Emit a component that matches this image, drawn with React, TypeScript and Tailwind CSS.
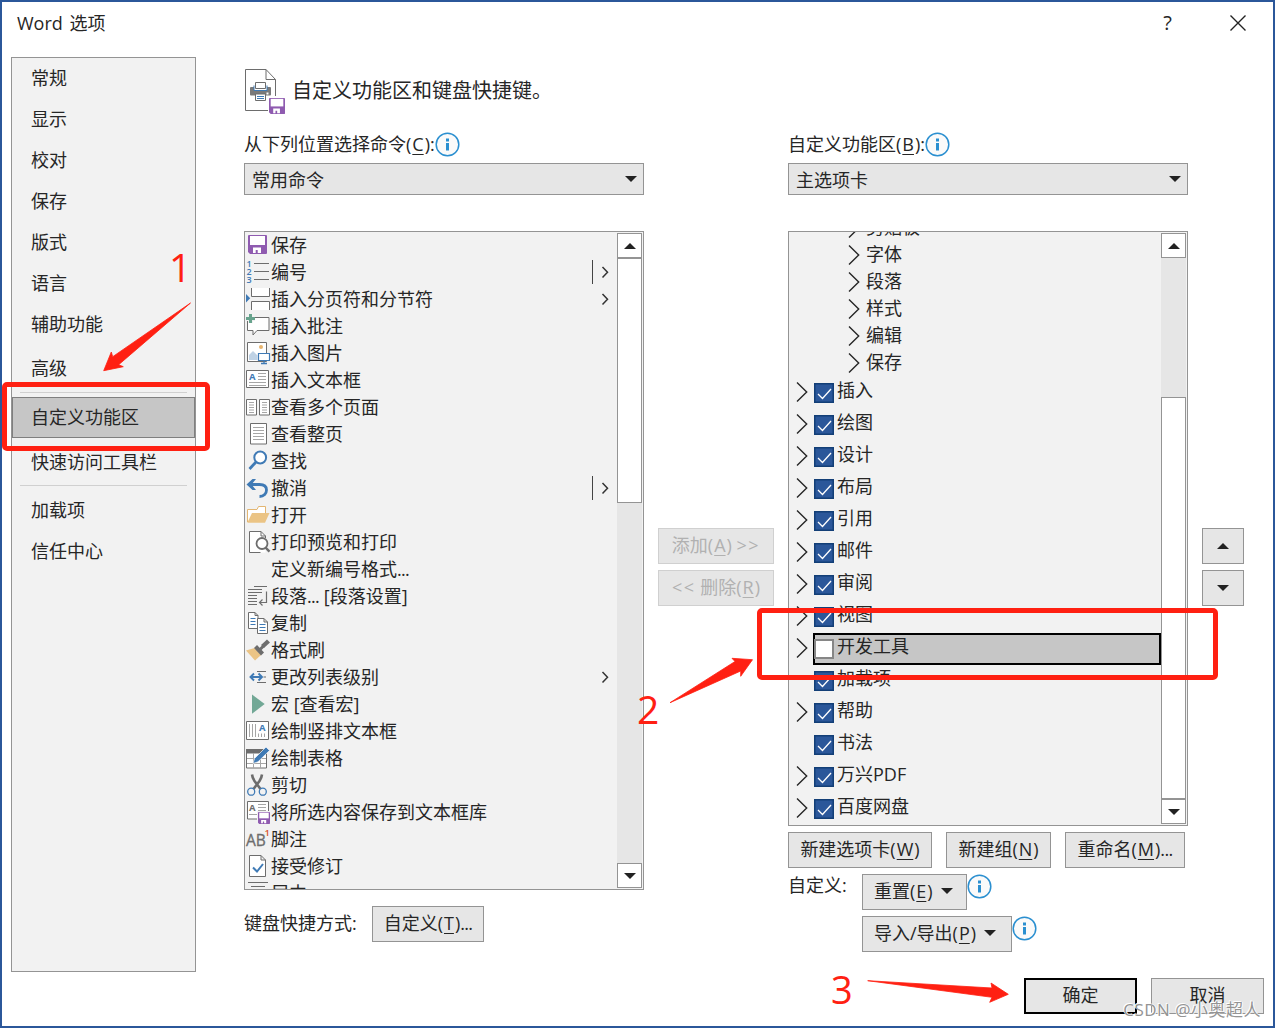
import React from 'react';
import clsx from 'clsx';

const GRAY = '#6d6d6d';
const BLUE = '#3f7ab5';
const PURPLE = '#8f5bb0';
const RED = '#ff2012';

interface Command {
  label: string;
  icon?: React.ReactNode;
  submenu?: 'plain' | 'split';
}

interface Tab {
  label: string;
  expandable?: boolean;
  checked?: boolean;
  selected?: boolean;
}

const Floppy = ({ x, y, size }: { x: number; y: number; size: number }) => (
  <g transform={`translate(${x} ${y}) scale(${size / 19})`}>
    <path d="M1 0h17a1 1 0 0 1 1 1v17a1 1 0 0 1-1 1H2l-2-2V1a1 1 0 0 1 1-1z" fill={PURPLE} />
    <path d="M2 1h15v9H2z" fill="#fff" />
    <path d="M5 12.5h8V18H9.7v-3H7.7v3H5z" fill="#fff" />
  </g>
);

const commands: Command[] = [
  { label: '保存', icon: <Floppy x={3} y={3} size={19} /> },
  {
    label: '编号',
    submenu: 'split',
    icon: (
      <>
        <g fill={BLUE} fontSize="9" fontWeight="600" fontFamily="Open Sans, sans-serif">
          <text x="1.5" y="8">1</text>
          <text x="1.5" y="16">2</text>
          <text x="1.5" y="24">3</text>
        </g>
        <path d="M9 4.5h15M9 12.5h15M9 20.5h15" stroke={GRAY} />
      </>
    ),
  },
  {
    label: '插入分页符和分节符',
    submenu: 'plain',
    icon: (
      <>
        <path d="M6.5 2v8.5h18V2M6.5 24v-8.5h18V24" fill="#fff" stroke={GRAY} />
        <path d="M1 8l4.2 4.2L1 16.4z" fill={BLUE} />
      </>
    ),
  },
  {
    label: '插入批注',
    icon: (
      <>
        <path d="M2.5 4.5h21.5v13H12L8 22v-4.5H2.5z" fill="#fff" stroke={GRAY} />
        <path d="M5.5 1v9M1 5.5h9" stroke="#f2f2f2" strokeWidth="5" />
        <path d="M5.5 1v9M1 5.5h9" stroke="#67a38d" strokeWidth="3" />
      </>
    ),
  },
  {
    label: '插入图片',
    icon: (
      <>
        <path d="M2.5 2.5h19v19h-19z" fill="#fff" stroke={GRAY} />
        <circle cx="16" cy="7" r="2" fill="#e8b56f" />
        <path d="M4 20v-5l4-4 4.5 4.5V20z" fill="#bfd2e5" />
        <path d="M13.5 13.5h11v7h-11z" fill="#fff" stroke={BLUE} strokeWidth="1.2" />
        <path d="M19 21v2.5M16 23.5h6" stroke={BLUE} strokeWidth="1.3" />
      </>
    ),
  },
  {
    label: '插入文本框',
    icon: (
      <>
        <path d="M1.5 3.5h22v17h-22z" fill="#fff" stroke={GRAY} />
        <text x="4" y="13.3" fill={BLUE} fontSize="9.5" fontWeight="700" fontFamily="Open Sans, sans-serif">A</text>
        <path d="M13 6.5h8M13 9.5h8M13 12.5h8M4 15.5h17M4 18.5h17" stroke="#a6a6a6" />
      </>
    ),
  },
  {
    label: '查看多个页面',
    icon: (
      <>
        <path d="M1.5 5.5h10v15.5h-10zM14.5 5.5h10v15.5h-10z" fill="#fff" stroke={GRAY} />
        <path
          d="M4 8.5h5M4 11h5M4 13.5h5M4 16h5M4 18.5h5M17 8.5h5M17 11h5M17 13.5h5M17 16h5M17 18.5h5"
          stroke="#a6a6a6"
        />
      </>
    ),
  },
  {
    label: '查看整页',
    icon: (
      <>
        <path d="M5.5 2.5h16v20.5h-16z" fill="#fff" stroke={GRAY} />
        <path d="M8 6.5h11M8 9.5h11M8 12.5h11M8 15.5h11M8 18.5h11" stroke="#a6a6a6" />
      </>
    ),
  },
  {
    label: '查找',
    icon: (
      <>
        <circle cx="15.2" cy="9.5" r="5.9" fill="#fff" stroke={BLUE} strokeWidth="2" />
        <path d="M11 14l-6.5 7" stroke={BLUE} strokeWidth="2.8" />
      </>
    ),
  },
  {
    label: '撤消',
    submenu: 'split',
    icon: (
      <>
        <path d="M4 9.5h10.500c4.500 0 7 2.200 7 5.500s-2.500 6.500-7 6.500" fill="none" stroke={BLUE} strokeWidth="2.8" />
        <path d="M1.5 9.5L7.5 4h3.5L6.5 9.5l4.5 5.5H7.500z" fill={BLUE} />
      </>
    ),
  },
  {
    label: '打开',
    icon: (
      <>
        <path d="M2.5 20V7.5h9.5L13.5 4.5h7V12" fill="#fff" stroke="#e3b672" />
        <path d="M7 11h17.5l-4.5 9.8H2.300z" fill="#ebc485" />
      </>
    ),
  },
  {
    label: '打印预览和打印',
    icon: (
      <>
        <path d="M4.5 2.5h11.5l4.5 4.5v16.5h-16z" fill="#fff" />
        <path d="M20.5 9V7L16 2.5H4.500v21h11M16 2.500V7h4.500" fill="none" stroke={GRAY} />
        <circle cx="17" cy="14.5" r="5.5" fill="#fff" stroke={GRAY} strokeWidth="1.8" />
        <path d="M20.5 18.5l4 4.2" stroke={GRAY} strokeWidth="2.4" />
      </>
    ),
  },
  { label: '定义新编号格式...' },
  {
    label: '段落... [段落设置]',
    icon: (
      <>
        <path d="M9 3.5h13M3 6.5h14M3 9.5h14M3 12.5h9M3 15.5h9M3 18.5h9M3 21.5h9" stroke={GRAY} />
        <path d="M21.5 8.5v11h-7M17.5 16.5l-3 3 3 3" fill="none" stroke={GRAY} strokeWidth="1.2" />
      </>
    ),
  },
  {
    label: '复制',
    icon: (
      <>
        <path d="M3.5 2.5H10l3 3v13H3.500zM10 2.500v3h3" fill="#fff" stroke={GRAY} />
        <path d="M5.5 8.5h5M5.5 11.5h5M5.5 14.5h5" stroke={BLUE} />
        <path d="M12.5 8.5h6.5l3.5 3.5v11.5h-10zM19 8.500V12h3.500" fill="#fff" stroke={GRAY} />
        <path d="M14.5 14.5h6M14.5 17.5h6M14.5 20.5h6" stroke={BLUE} />
      </>
    ),
  },
  {
    label: '格式刷',
    icon: (
      <>
        <path d="M1 13.5l8.5-2.5 6.5 7-6 5.500z" fill="#ebc485" />
        <path d="M10.5 9.5l7 7.500" stroke={GRAY} strokeWidth="4.2" />
        <path d="M15 12.5l4-4" stroke={GRAY} strokeWidth="3" />
        <path d="M17.5 9.5l6-5.500" stroke={GRAY} strokeWidth="4.4" />
      </>
    ),
  },
  {
    label: '更改列表级别',
    submenu: 'plain',
    icon: (
      <>
        <path d="M12 7.5h9M18.5 13h2.500M12 18.500h9" stroke={GRAY} />
        <path d="M6 13h11M9 9.5L5.500 13 9 16.500M13.500 9.500L17 13l-3.500 3.500" fill="none" stroke={BLUE} strokeWidth="1.9" />
      </>
    ),
  },
  { label: '宏 [查看宏]', icon: <path d="M7 3.5L19.7 13 7 22.7z" fill="#72a896" /> },
  {
    label: '绘制竖排文本框',
    icon: (
      <>
        <path d="M1.5 3.5h22v18h-22z" fill="#fff" stroke={GRAY} />
        <path d="M4.5 6v13M7.5 6v13M10.5 6v13M13.5 15.5V19M16.5 15.5V19M19.5 15.5V19" stroke="#a6a6a6" />
        <text x="14" y="13" fill={BLUE} fontSize="9.5" fontWeight="700" fontFamily="Open Sans, sans-serif">A</text>
      </>
    ),
  },
  {
    label: '绘制表格',
    icon: (
      <>
        <path d="M1.5 4.5h20v18.5h-20z" fill="#fff" stroke={GRAY} />
        <path d="M1 4h21v4.5H1z" fill={GRAY} />
        <path d="M2 13.5h19M2 18.5h19M8.5 8v15M15.5 8v15" stroke="#a6a6a6" />
        <path d="M8 18.5l1.5-5L21 2l3.5 3.500L13 16.800z" fill={BLUE} stroke="#f7f7f7" strokeWidth="0.7" />
      </>
    ),
  },
  {
    label: '剪切',
    icon: (
      <>
        <path d="M7 2.5c.3 3 1.2 4.500 2.500 6.500l6 8M17 2.500c-.3 3-1.200 4.500-2.500 6.500l-6 8" fill="none" stroke={GRAY} strokeWidth="2.6" />
        <circle cx="6.200" cy="19.700" r="3.500" fill="none" stroke={BLUE} strokeWidth="1.3" />
        <circle cx="17.800" cy="19.700" r="3.500" fill="none" stroke={BLUE} strokeWidth="1.3" />
      </>
    ),
  },
  {
    label: '将所选内容保存到文本框库',
    icon: (
      <>
        <path d="M2.5 2.5h21v17.5h-21z" fill="#fff" stroke={GRAY} />
        <text x="4" y="12" fill={GRAY} fontSize="9.5" fontWeight="700" fontFamily="Open Sans, sans-serif">A</text>
        <path d="M13 5.5h8M13 8.5h8M13 11.5h8M4 15.5h8" stroke="#a6a6a6" />
        <path d="M12 12h13.5v13.5H12z" fill="#f2f2f2" />
        <Floppy x={13} y={13} size={12} />
      </>
    ),
  },
  {
    label: '脚注',
    icon: (
      <>
        <text x="1" y="20" fill={GRAY} fontSize="15.5" fontFamily="Open Sans, sans-serif" stroke={GRAY} strokeWidth="0.3">AB</text>
        <text x="19.5" y="10" fill="#d8532e" fontSize="9.5" fontFamily="Open Sans, sans-serif" fontWeight="600">1</text>
      </>
    ),
  },
  {
    label: '接受修订',
    icon: (
      <>
        <path d="M4.5 2.5H16l4.500 4.500v16.500h-16zM16 2.500V7h4.500" fill="#fff" stroke={GRAY} />
        <path d="M8 14.5l4 4 6-7.500" fill="none" stroke={BLUE} strokeWidth="2" />
      </>
    ),
  },
  { label: '居中', icon: <path d="M3 2.5h20M6 6.5h14" stroke={GRAY} /> },
];

const groups = ['剪贴板', '字体', '段落', '样式', '编辑', '保存'];

const tabs: Tab[] = [
  { label: '插入', expandable: true, checked: true },
  { label: '绘图', expandable: true, checked: true },
  { label: '设计', expandable: true, checked: true },
  { label: '布局', expandable: true, checked: true },
  { label: '引用', expandable: true, checked: true },
  { label: '邮件', expandable: true, checked: true },
  { label: '审阅', expandable: true, checked: true },
  { label: '视图', expandable: true, checked: true },
  { label: '开发工具', expandable: true, selected: true },
  { label: '加载项', checked: true },
  { label: '帮助', expandable: true, checked: true },
  { label: '书法', checked: true },
  { label: '万兴PDF', expandable: true, checked: true },
  { label: '百度网盘', expandable: true, checked: true },
];

const Triangle = ({ up = false }: { up?: boolean }) => (
  <svg width="12" height="6" viewBox="0 0 12 6" className="shrink-0">
    <path d={up ? 'M0 6L6 0l6 6z' : 'M0 0h12L6 6z'} fill="#222" />
  </svg>
);

const Chevron = () => (
  <svg width="12" height="20" viewBox="0 0 12 20" className="-mt-[2px] shrink-0">
    <path d="M1 .5l9.7 9.500L1 19.500" fill="none" stroke="#262626" strokeWidth="1.4" />
  </svg>
);

const Info = () => (
  <svg width="25" height="25" viewBox="0 0 25 25" className="shrink-0">
    <circle cx="12.5" cy="12.5" r="11.3" fill="#fafafa" stroke="#2a8fd0" strokeWidth="1.5" />
    <path d="M11 6.5h3v3h-3zM11 11h3v7.5h-3z" fill="#2a8fd0" />
  </svg>
);

// Access key letter
const Key = ({ children }: { children: string }) => (
  <span className="mx-px underline decoration-1 underline-offset-[3px]">{children}</span>
);

const Dots = () => <span className="tracking-[-0.7px]">...</span>;

const Button = ({ className, children }: { className?: string; children: React.ReactNode }) => (
  <button
    className={clsx(
      'flex h-9 shrink-0 items-center whitespace-pre border bg-[#e6e6e6]',
      className ?? 'justify-center border-[#949494]'
    )}
  >
    {children}
  </button>
);

const Select = ({ value }: { value: string }) => (
  <div className="mt-[3px] flex h-8 items-center justify-between border border-[#949494] bg-[#e6e6e6] pl-[7px] pr-[6px]">
    <span className="pt-px">{value}</span>
    <Triangle />
  </div>
);

const ScrollButton = ({ up }: { up?: boolean }) => (
  <div className="flex h-[25px] shrink-0 items-center justify-center border border-[#949494] bg-white">
    <Triangle up={up} />
  </div>
);

const ScrollBar = ({ thumb }: { thumb: string }) => (
  <div className="my-px mr-px flex w-[25px] shrink-0 flex-col bg-[#e6e6e6]">
    <ScrollButton up />
    <div className="min-h-0 flex-1">
      <div className={clsx('border border-[#949494] bg-white', thumb)} />
    </div>
    <ScrollButton />
  </div>
);

const NavItem = ({ label, className }: { label: string; className?: string }) => (
  <div className={clsx('flex h-[41px] items-center pb-[2px] pl-[19px]', className)}>{label}</div>
);

const Sidebar = () => (
  <nav className="h-[915px] w-[185px] shrink-0 border border-[#949494] bg-[#f2f2f2]">
    {['常规', '显示', '校对', '保存', '版式', '语言', '辅助功能'].map((label) => (
      <NavItem key={label} label={label} />
    ))}
    <NavItem label="高级" className="mt-[3px]" />
    <div className="mx-2 mt-[3px] h-px bg-[#d0d0d0]" />
    <div className="mt-1 flex h-[41px] items-center border border-[#7f7f7f] bg-[#c6c6c6] pb-[2px] pl-[18px]">自定义功能区</div>
    <NavItem label="快速访问工具栏" className="mt-1" />
    <div className="mx-2 mt-[2px] h-px bg-[#d0d0d0]" />
    <NavItem label="加载项" className="mt-1" />
    <NavItem label="信任中心" />
  </nav>
);

const CommandRow = ({ command }: { command: Command }) => {
  const [before, after] = command.label.split('...');

  return (
    <div className="flex h-[27px] shrink-0 items-center">
      <svg width="26" height="27" viewBox="0 0 26 27" className="shrink-0">
        {command.icon}
      </svg>
      <span className="flex-1 whitespace-nowrap pb-[2px]">
        {before}
        {after !== undefined && <Dots />}
        {after}
      </span>
      {command.submenu === 'split' && <span className="-mt-px h-6 w-[1.5px] bg-[#444]" />}
      {command.submenu && (
        <svg width="24" height="14" viewBox="0 0 24 14" className="-mt-px">
          <path d="M9.5 2l5 5.200-5 5.200" fill="none" stroke="#333" strokeWidth="1.5" />
        </svg>
      )}
    </div>
  );
};

const TabRow = ({ tab }: { tab: Tab }) => (
  <div className="flex h-8 items-center pl-[7px]">
    <div className="flex w-[17px] shrink-0">{tab.expandable && <Chevron />}</div>
    <div
      className={clsx(
        'flex h-8 flex-1 items-center',
        tab.selected ? 'border-2 border-black bg-[#c6c6c6]' : 'pl-px'
      )}
    >
      {tab.checked ? (
        <svg width="20" height="20" viewBox="0 0 20 20" className="shrink-0">
          <path d="M.75.75h18.5v18.5H.75z" fill="#2b579a" stroke="#133f77" strokeWidth="1.5" />
          <path d="M4 11l4.5 4.500L17 6" fill="none" stroke="#fff" strokeWidth="1.3" />
        </svg>
      ) : (
        <span className="-ml-px size-5 shrink-0 border-2 border-[#868686] bg-white" />
      )}
      <span className="-mt-[6px] ml-[3px]">{tab.label}</span>
    </div>
  </div>
);

const HeaderIcon = () => (
  <svg width="42" height="46" viewBox="0 0 42 46" className="shrink-0">
    <path d="M30.5 27V10.5L21 .5H.5v41H23M21 .5v10h9.500" fill="#fff" stroke={GRAY} />
    <path d="M5 19a1 1 0 0 1 1-1h19a1 1 0 0 1 1 1v6.500a1 1 0 0 1-1 1H6a1 1 0 0 1-1-1z" fill="#7a7a7a" />
    <path d="M9 16.5v5h13v-5" fill="#fff" stroke={BLUE} />
    <path d="M10.5 13.5h10v6h-10z" fill="#fff" stroke={GRAY} />
    <path d="M10.5 25h10v6.5h-10z" fill="#fff" stroke={GRAY} />
    <path d="M12 27.5h7M12 29.5h7" stroke={BLUE} />
    <path d="M21.5 23.5h2v2h-2z" fill="#fff" />
    <Floppy x={24} y={29} size={16} />
  </svg>
);

// Red callouts drawn over the dialog
const Annotations = () => (
  <div className="pointer-events-none absolute -left-[2px] -top-[2px] h-[1028px] w-[1275px] text-[39px] leading-none text-[#ff2012]">
    <svg width="1275" height="1028" viewBox="0 0 1275 1028" className="absolute left-0 top-0">
      <g fill={RED}>
        <path d="M190.500 303L112.700 356.700 111.300 352 103.700 370.700 123.300 366.700 118.700 364.700z" stroke={RED} strokeWidth="0.8" />
        <path d="M670 702.700L735 661.500 732 658.300 752.500 659.700 740.700 676.300V671z" stroke={RED} strokeWidth="0.8" />
        <path d="M867.700 980.700L992 988 991 983 1008.300 994.300 989.700 1002.300 992 997.300z" stroke={RED} strokeWidth="0.8" />
      </g>
    </svg>
    <div className="absolute left-[2px] top-[382px] h-[69px] w-[208px] rounded-[5px] border-[5px] border-[#ff2012]" />
    <div className="absolute left-[757px] top-[608px] h-[72px] w-[461px] rounded-[5px] border-[5px] border-[#ff2012]" />
    <span className="absolute left-[169px] top-[247px]">1</span>
    <span className="absolute left-[637px] top-[689px]">2</span>
    <span className="absolute left-[831px] top-[970px] text-[38px]">3</span>
  </div>
);

export default function App() {
  return (
    <div className="relative h-[1028px] w-[1275px] overflow-hidden border-2 border-[#2b579a] bg-white font-['Open_Sans','Noto_Sans_CJK_SC',sans-serif] text-[18px] leading-[24px] text-[#262626]">
      <header className="mb-[14px] flex h-[41px] items-center pl-[15px]">
        <h1 className="flex-1 [word-spacing:2px]">Word 选项</h1>
        <span className="text-[20px]">?</span>
        <svg width="16" height="16" viewBox="0 0 16 16" className="ml-[58px] mr-[27px]">
          <path d="M.5.5l15 15M15.5.5l-15 15" stroke="#222" strokeWidth="1.4" />
        </svg>
      </header>

      <div className="flex h-[915px] pl-[9px]">
        <Sidebar />
        <main className="ml-12 pt-3">
          <div className="flex h-[46px] items-center pl-px">
            <HeaderIcon />
            <h2 className="-mt-[2px] ml-[5px] text-[20px]">自定义功能区和键盘快捷键。</h2>
          </div>

          <div className="mt-[15px] flex">
            <section className="w-[400px]">
              <div className="flex h-[30px] items-center pb-px">
                <span className="pb-px">从下列位置选择命令(<Key>C</Key>):</span>
                <Info />
              </div>
              <Select value="常用命令" />
              <div className="mt-9 flex h-[659px] border border-[#949494] bg-[#f2f2f2]">
                <div className="flex min-w-0 flex-1 flex-col overflow-hidden">
                  {commands.map((command) => (
                    <CommandRow key={command.label} command={command} />
                  ))}
                </div>
                <ScrollBar thumb="h-[245px]" />
              </div>
              <div className="mt-4 flex items-center">
                <span className="w-32 pb-[2px]">键盘快捷方式:</span>
                <Button className="w-28 justify-center border-[#949494] pb-[2px]">
                  自定义(<Key>T</Key>)<Dots />
                </Button>
              </div>
            </section>

            <div className="ml-[14px] mt-[398px] flex w-[116px] flex-col gap-[6px] text-[#b1b1b1]">
              <Button className="justify-center border-[#d0d0d0] pb-[2px]">
                添加(<Key>A</Key>) <span className="tracking-[1.5px]">&gt;&gt;</span>
              </Button>
              <Button className="justify-center border-[#d0d0d0] pb-[2px]">
                <span className="tracking-[1.5px]">&lt;&lt;</span> 删除(<Key>R</Key>)
              </Button>
            </div>

            <section className="ml-[14px] w-[400px]">
              <div className="flex h-[30px] items-center pb-px">
                <span className="pb-px">自定义功能区(<Key>B</Key>):</span>
                <Info />
              </div>
              <Select value="主选项卡" />
              <div className="mt-9 flex h-[595px] border border-[#949494] bg-[#f2f2f2]">
                <div className="min-w-0 flex-1 overflow-hidden">
                  <div className="-mt-[17px]">
                    {groups.map((label) => (
                      <div key={label} className="flex h-[27px] items-center gap-[6px] pl-[59px]">
                        <Chevron />
                        <span className="pb-[3px]">{label}</span>
                      </div>
                    ))}
                  </div>
                  {tabs.map((tab) => (
                    <TabRow key={tab.label} tab={tab} />
                  ))}
                </div>
                <ScrollBar thumb="mt-[139px] h-[402px]" />
              </div>
              <div className="mt-[6px] flex gap-[14px]">
                <Button className="w-36 justify-center border-[#949494] pb-[2px]">
                  新建选项卡(<Key>W</Key>)
                </Button>
                <Button className="w-[105px] justify-center border-[#949494] pb-[2px]">
                  新建组(<Key>N</Key>)
                </Button>
                <Button className="w-[120px] justify-center border-[#949494] pb-[2px]">
                  重命名(<Key>M</Key>)<Dots />
                </Button>
              </div>
              <div className="mt-[6px] flex">
                <span className="-mt-px w-[74px]">自定义:</span>
                <Button className="w-[105px] gap-2 border-[#949494] pb-[2px] pl-[11px]">
                  <span>重置(<Key>E</Key>)</span>
                  <Triangle />
                </Button>
                <Info />
              </div>
              <div className="mt-[6px] flex pl-[74px]">
                <Button className="w-[150px] gap-2 border-[#949494] pb-[2px] pl-[11px]">
                  <span>导入/导出(<Key>P</Key>)</span>
                  <Triangle />
                </Button>
                <Info />
              </div>
            </section>

            <div className="ml-[14px] mt-[398px] flex w-[42px] flex-col gap-[6px]">
              <Button>
                <Triangle up />
              </Button>
              <Button>
                <Triangle />
              </Button>
            </div>
          </div>
        </main>
      </div>

      <footer className="mt-[6px] flex justify-end gap-[14px] pr-[9px]">
        <Button className="w-[113px] justify-center border-2 border-black pb-[2px]">确定</Button>
        <Button className="w-[113px] justify-center border-[#949494] pb-[2px]">取消</Button>
      </footer>

      <Annotations />
      <div className="absolute bottom-[4px] right-[12px] whitespace-nowrap text-[17px] tracking-[0.5px] text-[#949494] [text-shadow:-1px_-1px_0_#fff,1px_0_0_#fff]">
        CSDN @小奥超人
      </div>
    </div>
  );
}
